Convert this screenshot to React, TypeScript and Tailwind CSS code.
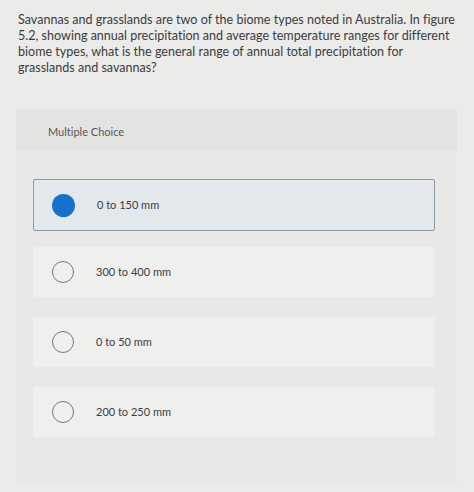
const options = [
  { label: "0 to 150 mm", selected: true },
  { label: "300 to 400 mm", selected: false },
  { label: "0 to 50 mm", selected: false },
  { label: "200 to 250 mm", selected: false },
];

export default function App() {
  return (
    <div
      className="w-[474px] h-[492px] overflow-hidden bg-[#ebebe9] text-[#3b3b3d] [font-variant-ligatures:none]"
      style={{ fontFamily: "Lato, 'Open Sans', sans-serif" }}
    >
      <p className="pl-[18px] pt-[12px] text-[12.55px] leading-[16px] whitespace-nowrap">
        Savannas and grasslands are two of the biome types noted in Australia. In figure
        <br />
        5.2, showing annual precipitation and average temperature ranges for different
        <br />
        biome types, what is the general range of annual total precipitation for
        <br />
        grasslands and savannas?
      </p>

      <div className="ml-4 mr-[17px] mt-[34px] bg-[#e8e8e6] h-[375px]">
        <div className="h-[40px] bg-[#e3e3e1] pl-8 pt-[14px] text-[11px] text-[#55565a]">
          Multiple Choice
        </div>
        <div className="flex flex-col gap-[20px] pt-[29px] pl-[17px] pr-[22px]">
          {options.map((o) =>
            o.selected ? (
              <div
                key={o.label}
                className="h-[52px] -mb-[4px] flex items-center bg-[#e3e8ec] border border-[#8d97a5] rounded-[2px]"
              >
                <div className="ml-[18px] w-[23px] h-[23px] rounded-full bg-[#1672c9]" />
                <span className="ml-[22px] text-[11px] text-[#3b3b3d]">{o.label}</span>
              </div>
            ) : (
              <div key={o.label} className="h-[50px] flex items-center bg-[#efefed]">
                <div className="ml-[19px] w-[22px] h-[22px] rounded-full border border-[#77787c]" />
                <span className="ml-[22px] text-[11px] text-[#3b3b3d]">{o.label}</span>
              </div>
            )
          )}
        </div>
      </div>
    </div>
  );
}
